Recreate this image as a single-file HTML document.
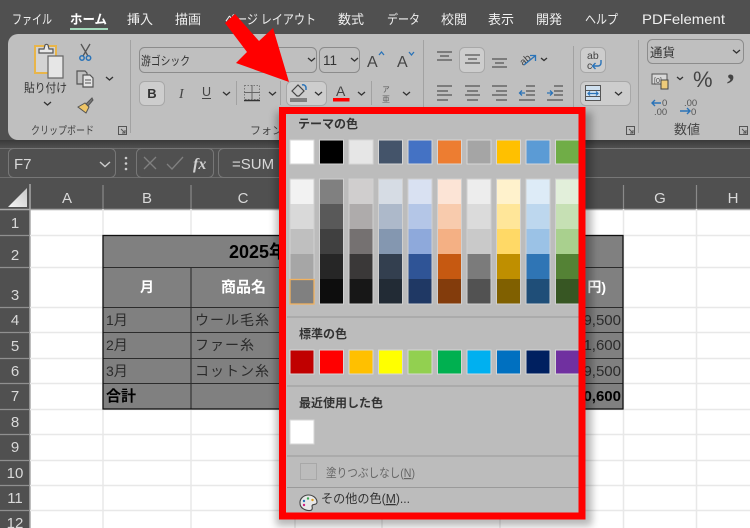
<!DOCTYPE html>
<html lang="ja"><head><meta charset="utf-8"><title>Excel</title>
<style>
html,body{margin:0;padding:0;background:#fff}
svg{display:block;position:absolute;left:0;top:0}
text{font-family:"Liberation Sans","Noto Sans CJK JP",sans-serif;white-space:pre}
.tab{font-size:13px;fill:#f0f0f0}
.rb{font-size:12px;fill:#333}
.lab{font-size:11px;fill:#444}
.hd{font-size:15px;fill:#d9d9d9;text-anchor:middle}
.cell{font-size:14px;fill:#2b2b2b}
.num{font-size:15px;fill:#2b2b2b;text-anchor:end}
.pt{font-size:12px;font-weight:700;fill:#333}
.ch{fill:none;stroke:#333;stroke-width:1.3}
.ln{stroke:#555;stroke-width:1.3}
.g{stroke:#e8e8e8;stroke-width:1.5}
.tb{stroke:#2c2c2c;stroke-width:1.1}
.btn{fill:#cdcdcd;stroke:#a8a8a8}
.box{fill:#bfbfbf;stroke:#8c8c8c}
.s{stroke:#d6d6d6;stroke-width:1}
</style></head><body>
<svg width="750" height="528" viewBox="0 0 750 528" xmlns="http://www.w3.org/2000/svg">
<defs>
<filter id="sh" x="-10%" y="-10%" width="120%" height="120%"><feGaussianBlur stdDeviation="4"/></filter>
<linearGradient id="top" x1="0" y1="0" x2="0" y2="1"><stop offset="0" stop-color="#3a3a3a"/><stop offset="1" stop-color="#505050"/></linearGradient>
<linearGradient id="corner" x1="0" y1="1" x2="1" y2="0"><stop offset="0" stop-color="#f5f5f5"/><stop offset="1" stop-color="#c8c8c8"/></linearGradient>
</defs>
<rect width="750" height="528" fill="#fff"/>
<rect width="750" height="209" fill="#505050"/>
<rect y="140" width="750" height="8" fill="url(#top)"/>

<!-- tabs -->
<text x="12" y="24" class="tab" textLength="40" lengthAdjust="spacingAndGlyphs">ファイル</text>
<text x="70" y="24" class="tab" style="font-weight:700;fill:#fff" textLength="37" lengthAdjust="spacingAndGlyphs">ホーム</text>
<rect x="70" y="28" width="38" height="2" fill="#a3d9bb"/>
<text x="127" y="24" class="tab">挿入</text>
<text x="175" y="24" class="tab">描画</text>
<text x="225" y="24" class="tab" textLength="91" lengthAdjust="spacingAndGlyphs">ページ レイアウト</text>
<text x="338" y="24" class="tab">数式</text>
<text x="387" y="24" class="tab" textLength="33" lengthAdjust="spacingAndGlyphs">データ</text>
<text x="441" y="24" class="tab">校閲</text>
<text x="488" y="24" class="tab">表示</text>
<text x="536" y="24" class="tab">開発</text>
<text x="585" y="24" class="tab" textLength="33" lengthAdjust="spacingAndGlyphs">ヘルプ</text>
<text x="642" y="24" class="tab" style="font-size:14px" textLength="83" lengthAdjust="spacingAndGlyphs">PDFelement</text>

<!-- ribbon -->
<path d="M760 34H18a10 10 0 0 0-10 10v86a10 10 0 0 0 10 10h742z" fill="#bfbfbf"/>
<g stroke="#a2a2a2" stroke-width="1">
<path d="M130.500 40V133M423.500 40V117M573.500 46V117M638.500 40V133M236.500 81V105M280.500 81V105M371.500 81V105"/>
</g>

<!-- paste -->
<path d="M35 46h21v27H35z" fill="#d4d4d4" stroke="#e8b54a" stroke-width="2"/>
<path d="M39 49h5l1-4a2 2 0 0 1 3 0l1 4h4v4H39z" fill="#e8e8e8" stroke="#555" stroke-width="1.200"/>
<path d="M48 56h15v22H48z" fill="#e6e6e6" stroke="#666" stroke-width="1.200"/>
<text x="24" y="92" class="rb" textLength="43" lengthAdjust="spacingAndGlyphs">貼り付け</text>
<path d="M44 102l3.500 3 3.500-3" class="ch"/>
<!-- scissors -->
<path d="M81 44l7 12M90 44l-7 12" stroke="#555" stroke-width="1.300" fill="none"/>
<circle cx="82" cy="58" r="2.200" fill="none" stroke="#2a73b8" stroke-width="1.500"/><circle cx="88.500" cy="58" r="2.200" fill="none" stroke="#2a73b8" stroke-width="1.500"/>
<!-- copy -->
<path d="M77 71h8l2 2v11h-10z" fill="none" stroke="#555" stroke-width="1.200"/>
<path d="M83 75h7l3 3v9H83z" fill="#e4e4e4" stroke="#555" stroke-width="1.200"/>
<path d="M85 80h6M85 83h6" stroke="#555"/>
<path d="M106 77l3.500 3 3.500-3" class="ch"/>
<!-- brush -->
<path d="M86 104l6-6 1 2-5 6z" fill="#777" stroke="#555"/>
<path d="M78 107l7-4 4 4-3 6z" fill="#eec566" stroke="#555"/>

<text x="31" y="134" class="lab" textLength="63" lengthAdjust="spacingAndGlyphs">クリップボード</text>
<g fill="none" stroke="#555"><path d="M118.500 126.500h8v8h-8zM121 129l4 4M125 130v3h-3"/><path d="M626.500 126.500h8v8h-8zM629 129l4 4M633 130v3h-3"/><path d="M739.500 126.500h8v8h-8zM742 129l4 4M746 130v3h-3"/></g>
<text x="250" y="134" class="lab">フォント</text>
<text x="674" y="134" class="lab" style="font-size:13px">数値</text>

<!-- font boxes -->
<rect x="139.500" y="47.500" width="177" height="25" rx="5" class="box"/>
<text x="141" y="65" style="font-size:12px;fill:#333" textLength="49" lengthAdjust="spacingAndGlyphs">游ゴシック</text>
<path d="M308 58l3.500 3 3.500-3" class="ch"/>
<rect x="319.500" y="47.500" width="40" height="25" rx="5" class="box"/>
<text x="323" y="65" style="font-size:13.500px;fill:#333">11</text>
<path d="M351 58l3.500 3 3.500-3" class="ch"/>
<text x="367" y="67" style="font-size:16px;fill:#444">A</text>
<path d="M379 55l2.500-3 2.500 3" fill="none" stroke="#2a73b8" stroke-width="1.300"/>
<text x="397" y="67" style="font-size:16px;fill:#444">A</text>
<path d="M409 52l2.500 3 2.500-3" fill="none" stroke="#2a73b8" stroke-width="1.300"/>

<!-- row 2 font -->
<rect x="139.500" y="81.500" width="25" height="24" rx="5" class="btn"/>
<text x="152" y="98" style="font-size:13px;font-weight:700;fill:#333;text-anchor:middle">B</text>
<text x="179" y="98" style="font-size:14px;font-style:italic;font-family:'Liberation Serif',serif;fill:#444">I</text>
<text x="202" y="96" style="font-size:12.500px;fill:#444">U</text>
<path d="M202 98.500h9" stroke="#444"/>
<path d="M223 92l3.500 3 3.500-3" class="ch"/>
<path d="M244.500 85.500h15v14h-15z" fill="none" stroke="#777" stroke-dasharray="1.500 1.500"/>
<path d="M252 85v14M244 92.500h16" stroke="#666"/>
<path d="M244 100.500h16" stroke="#333" stroke-width="1.500"/>
<path d="M269 92l3.500 3 3.500-3" class="ch"/>
<rect x="286.500" y="81.500" width="40" height="24" rx="5" class="btn"/>
<path d="M292 91l6-6 6 6-5 5h-2z" fill="none" stroke="#444" stroke-width="1.200"/>
<path d="M302 85a3 3 0 0 1 4 3v2" fill="none" stroke="#2a73b8" stroke-width="1.500"/>
<rect x="290" y="98" width="17" height="4" fill="#808080"/>
<path d="M315 92l3.500 3 3.500-3" class="ch"/>
<text x="336" y="96" style="font-size:14px;fill:#444">A</text>
<rect x="333" y="98" width="16.500" height="3.500" fill="#f00"/>
<path d="M358 92l3.500 3 3.500-3" class="ch"/>
<text x="386" y="92" style="font-size:7.500px;fill:#555;text-anchor:middle">ア</text>
<text x="386" y="102" style="font-size:8px;fill:#666;text-anchor:middle">亜</text>
<path d="M403 92l3.500 3 3.500-3" class="ch"/>

<!-- alignment -->
<rect x="459.500" y="47.500" width="25" height="25" rx="5" class="btn"/>
<path d="M437 52h15M440 56h9M437 60h15" class="ln"/>
<path d="M465 55h15M468 59h9M465 63h15" class="ln"/>
<path d="M492 59h15M495 63h9M492 67h15" class="ln"/>
<text x="0" y="0" transform="translate(523 66) rotate(-40)" style="font-size:10px;fill:#444">ab</text>
<path d="M524 65l11-9M530 55.500h5.500v5.500" fill="none" stroke="#2a73b8" stroke-width="1.300"/>
<path d="M541 58l3 2.500 3-2.500" class="ch"/>
<path d="M437 86h15M437 91h11M437 95h15M437 100h11" class="ln"/>
<path d="M465 86h15M467 91h11M465 95h15M467 100h11" class="ln"/>
<path d="M492 86h15M496 91h11M492 95h15M496 100h11" class="ln"/>
<path d="M526 86h9M526 91h9M526 95h9M519 100h16" class="ln"/>
<path d="M520 93h5M522 90.500l-2.500 2.500 2.500 2.500" fill="none" stroke="#2a73b8" stroke-width="1.300"/>
<path d="M554 86h9M554 91h9M554 95h9M547 100h16" class="ln"/>
<path d="M547 93h5M550 90.500l2.500 2.500-2.500 2.500" fill="none" stroke="#2a73b8" stroke-width="1.300"/>

<!-- wrap / merge -->
<rect x="580.500" y="47.500" width="25" height="25" rx="5" class="btn"/>
<text x="587" y="59" style="font-size:10.500px;fill:#444">ab</text>
<text x="587" y="69" style="font-size:10.500px;fill:#444">c</text>
<path d="M601 60v3a3 3 0 0 1-3 3h-5M595.500 63l-3 3 3 3" fill="none" stroke="#2a73b8" stroke-width="1.400"/>
<rect x="580.500" y="81.500" width="50" height="24" rx="5" class="btn"/>
<rect x="585.500" y="85.500" width="15" height="15" fill="#cfe0ef" stroke="#555"/>
<path d="M585 90.500h16M585 96.500h16" stroke="#555"/>
<path d="M588 93.500h10M590 91.500l-2 2 2 2M596 91.500l2 2-2 2" fill="none" stroke="#2a73b8" stroke-width="1.200"/>
<path d="M615 92l3.500 3 3.500-3" class="ch"/>

<!-- number -->
<rect x="647.500" y="39.500" width="96" height="24" rx="5" class="box"/>
<text x="650" y="57" style="font-size:12.500px;fill:#333">通貨</text>
<path d="M733 50l3.500 3 3.500-3" class="ch"/>
<rect x="652" y="74" width="15" height="10" fill="#d8d8d8" stroke="#555"/>
<text x="654" y="83" style="font-size:7px;fill:#444">[0]</text>
<rect x="661" y="80" width="7" height="9" fill="#eecb7a" stroke="#444"/>
<path d="M677 77l3 2.500 3-2.500" class="ch"/>
<text x="693" y="87" style="font-size:22px;fill:#444">%</text>
<text x="727" y="79" style="font-size:30px;font-weight:700;fill:#444;font-family:'Liberation Serif',serif">,</text>
<text x="662" y="106" style="font-size:9.500px;fill:#555">0</text>
<text x="654" y="115" style="font-size:9.500px;fill:#555">.00</text>
<path d="M652 103h9M655 100l-3 3 3 3" fill="none" stroke="#2a73b8" stroke-width="1.400"/>
<text x="684" y="106" style="font-size:9.500px;fill:#555">.00</text>
<text x="691" y="115" style="font-size:9.500px;fill:#555">0</text>
<path d="M680 111h10M687 108l3 3-3 3" fill="none" stroke="#2a73b8" stroke-width="1.400"/>

<!-- formula bar -->
<path d="M0 148.500H750M0 177.500H750" stroke="#6e6e6e"/>
<rect y="149" width="750" height="28" fill="#505050"/>
<rect x="8.500" y="148.500" width="107" height="29" rx="5" fill="#505050" stroke="#777"/>
<text x="14" y="169" style="font-size:15px;fill:#d8d8d8">F7</text>
<path d="M100 162l5 4.500 5-4.500" fill="none" stroke="#ccc" stroke-width="1.400"/>
<circle cx="126" cy="158" r="1.300" fill="#ccc"/><circle cx="126" cy="163.500" r="1.300" fill="#ccc"/><circle cx="126" cy="169" r="1.300" fill="#ccc"/>
<rect x="136.500" y="148.500" width="77" height="29" rx="5" fill="#505050" stroke="#777"/>
<path d="M144 157l12 12M156 157l-12 12M167 164l5 5 11-12" fill="none" stroke="#808080" stroke-width="1.300"/>
<text x="193" y="169" style="font-size:16px;font-style:italic;font-weight:700;font-family:'Liberation Serif',serif;fill:#d0d0d0">fx</text>
<rect x="218.500" y="148.500" width="560" height="29" rx="5" fill="#505050" stroke="#777"/>
<text x="232" y="169" style="font-size:15px;fill:#d8d8d8">=SUM</text>

<!-- headers -->
<rect x="0" y="209" width="30" height="319" fill="#505050"/>
<path d="M0 209.500H750" stroke="#a8a8a8" stroke-width="1.500"/>
<path d="M30 184V528" stroke="#a8a8a8" stroke-width="1.500"/>
<path d="M8 207L27 188V207z" fill="url(#corner)"/>
<path d="M103 185V209M191 185V209M623.500 185V209M696.500 185V209" stroke="#8a8a8a" stroke-width="1.200"/>
<text x="67" y="203" class="hd">A</text>
<text x="147" y="203" class="hd">B</text>
<text x="243" y="203" class="hd">C</text>
<text x="660" y="203" class="hd">G</text>
<text x="733" y="203" class="hd">H</text>
<path d="M0 235.500H30M0 267.500H30M0 307.500H30M0 332.500H30M0 358.500H30M0 383.500H30M0 409.500H30M0 434.500H30M0 460.500H30M0 485.500H30M0 510.500H30" stroke="#8f8f8f" stroke-width="1.200"/>
<text x="15" y="228" class="hd">1</text>
<text x="15" y="260" class="hd">2</text>
<text x="15" y="300" class="hd">3</text>
<text x="15" y="325" class="hd">4</text>
<text x="15" y="351" class="hd">5</text>
<text x="15" y="376" class="hd">6</text>
<text x="15" y="401" class="hd">7</text>
<text x="15" y="427" class="hd">8</text>
<text x="15" y="452" class="hd">9</text>
<text x="15" y="478" class="hd">10</text>
<text x="15" y="503" class="hd">11</text>
<text x="15" y="528" class="hd">12</text>

<!-- grid -->
<path class="g" d="M103 209V528M191 209V528M295 409V528M382 409V528M500 409V528M623.500 209V528M696.500 209V528"/>
<path class="g" d="M30 235.500H750M30 267.500H750M30 307.500H750M30 332.500H750M30 358.500H750M30 383.500H750M30 409.500H750M30 434.500H750M30 460.500H750M30 485.500H750M30 510.500H750"/>

<!-- table -->
<rect x="103" y="236" width="520" height="173" fill="#808080"/>
<path class="tb" d="M103 267.500H623M103 307.500H623M103 332.500H623M103 358.500H623M103 383.500H623M191 267V409"/>
<rect x="103" y="235.500" width="520" height="173.500" fill="none" stroke="#111" stroke-width="1.300"/>
<text x="229" y="258" style="font-size:18px;font-weight:700;fill:#000">2025年</text>
<text x="147" y="292" style="font-size:14px;font-weight:700;fill:#fff;text-anchor:middle">月</text>
<text x="243.500" y="292" style="font-size:15px;font-weight:700;fill:#fff;text-anchor:middle">商品名</text>
<text x="606" y="292" style="font-size:14px;font-weight:700;fill:#fff;text-anchor:end">円)</text>
<text x="106" y="325" class="cell">1月</text>
<text x="106" y="350" class="cell">2月</text>
<text x="106" y="376" class="cell">3月</text>
<text x="106" y="401" style="font-size:15px;font-weight:700;fill:#000">合計</text>
<text x="195" y="325" class="cell" style="letter-spacing:1px">ウール毛糸</text>
<text x="195" y="350" class="cell" style="letter-spacing:1px">ファー糸</text>
<text x="195" y="376" class="cell" style="letter-spacing:1px">コットン糸</text>
<text x="621" y="325" class="num">129,500</text>
<text x="621" y="350" class="num">181,600</text>
<text x="621" y="376" class="num">169,500</text>
<text x="621" y="401" class="num" style="font-weight:700;fill:#000">480,600</text>

<!-- dropdown -->
<rect x="276" y="112" width="316" height="414" fill="#000" opacity=".28" filter="url(#sh)"/>
<rect x="283" y="111" width="299" height="405" fill="#bcbcbc"/>
<text x="298" y="128" class="pt">テーマの色</text>

<g class="s">
<rect x="290" y="140" width="24" height="24" fill="#fff"/>
<rect x="319.500" y="140" width="24" height="24" fill="#000"/>
<rect x="349" y="140" width="24" height="24" fill="#e6e6e6"/>
<rect x="378.500" y="140" width="24" height="24" fill="#44546a"/>
<rect x="408" y="140" width="24" height="24" fill="#4472c4"/>
<rect x="437.500" y="140" width="24" height="24" fill="#ed7d31"/>
<rect x="467" y="140" width="24" height="24" fill="#a5a5a5"/>
<rect x="496.500" y="140" width="24" height="24" fill="#ffc000"/>
<rect x="526" y="140" width="24" height="24" fill="#5b9bd5"/>
<rect x="555.500" y="140" width="24" height="24" fill="#70ad47"/>
</g>

<g>
<rect x="290" y="179" width="24" height="25" fill="#f2f2f2"/><rect x="290" y="204" width="24" height="25" fill="#d9d9d9"/><rect x="290" y="229" width="24" height="25" fill="#bfbfbf"/><rect x="290" y="254" width="24" height="25" fill="#a6a6a6"/><rect x="290" y="279" width="24" height="25" fill="#808080"/>
<rect x="319.500" y="179" width="24" height="25" fill="#808080"/><rect x="319.500" y="204" width="24" height="25" fill="#595959"/><rect x="319.500" y="229" width="24" height="25" fill="#404040"/><rect x="319.500" y="254" width="24" height="25" fill="#262626"/><rect x="319.500" y="279" width="24" height="25" fill="#0d0d0d"/>
<rect x="349" y="179" width="24" height="25" fill="#d0cece"/><rect x="349" y="204" width="24" height="25" fill="#aeabab"/><rect x="349" y="229" width="24" height="25" fill="#757171"/><rect x="349" y="254" width="24" height="25" fill="#3a3838"/><rect x="349" y="279" width="24" height="25" fill="#171717"/>
<rect x="378.500" y="179" width="24" height="25" fill="#d6dce4"/><rect x="378.500" y="204" width="24" height="25" fill="#adb9ca"/><rect x="378.500" y="229" width="24" height="25" fill="#8497b0"/><rect x="378.500" y="254" width="24" height="25" fill="#333f4f"/><rect x="378.500" y="279" width="24" height="25" fill="#222b35"/>
<rect x="408" y="179" width="24" height="25" fill="#d9e1f2"/><rect x="408" y="204" width="24" height="25" fill="#b4c6e7"/><rect x="408" y="229" width="24" height="25" fill="#8ea9db"/><rect x="408" y="254" width="24" height="25" fill="#2f5496"/><rect x="408" y="279" width="24" height="25" fill="#1f3864"/>
<rect x="437.500" y="179" width="24" height="25" fill="#fce4d6"/><rect x="437.500" y="204" width="24" height="25" fill="#f8cbad"/><rect x="437.500" y="229" width="24" height="25" fill="#f4b084"/><rect x="437.500" y="254" width="24" height="25" fill="#c65911"/><rect x="437.500" y="279" width="24" height="25" fill="#833c0c"/>
<rect x="467" y="179" width="24" height="25" fill="#ededed"/><rect x="467" y="204" width="24" height="25" fill="#dbdbdb"/><rect x="467" y="229" width="24" height="25" fill="#c9c9c9"/><rect x="467" y="254" width="24" height="25" fill="#7b7b7b"/><rect x="467" y="279" width="24" height="25" fill="#525252"/>
<rect x="496.500" y="179" width="24" height="25" fill="#fff2cc"/><rect x="496.500" y="204" width="24" height="25" fill="#ffe699"/><rect x="496.500" y="229" width="24" height="25" fill="#ffd966"/><rect x="496.500" y="254" width="24" height="25" fill="#bf8f00"/><rect x="496.500" y="279" width="24" height="25" fill="#806000"/>
<rect x="526" y="179" width="24" height="25" fill="#ddebf7"/><rect x="526" y="204" width="24" height="25" fill="#bdd7ee"/><rect x="526" y="229" width="24" height="25" fill="#9bc2e6"/><rect x="526" y="254" width="24" height="25" fill="#2f75b5"/><rect x="526" y="279" width="24" height="25" fill="#1f4e78"/>
<rect x="555.500" y="179" width="24" height="25" fill="#e2efda"/><rect x="555.500" y="204" width="24" height="25" fill="#c6e0b4"/><rect x="555.500" y="229" width="24" height="25" fill="#a9d08e"/><rect x="555.500" y="254" width="24" height="25" fill="#548235"/><rect x="555.500" y="279" width="24" height="25" fill="#375623"/>
</g>
<g fill="none" stroke="#d0d0d0"><rect x="290" y="179" width="24" height="125"/><rect x="319.500" y="179" width="24" height="125"/><rect x="349" y="179" width="24" height="125"/><rect x="378.500" y="179" width="24" height="125"/><rect x="408" y="179" width="24" height="125"/><rect x="437.500" y="179" width="24" height="125"/><rect x="467" y="179" width="24" height="125"/><rect x="496.500" y="179" width="24" height="125"/><rect x="526" y="179" width="24" height="125"/><rect x="555.500" y="179" width="24" height="125"/></g>
<rect x="290" y="279.500" width="24" height="24.500" fill="none" stroke="#f2b25f" stroke-width="1.300"/>

<path d="M287 317H580M287 386H580M287 456H580M287 487.500H580" stroke="#9a9a9a" stroke-width="1"/>

<text x="299" y="338" class="pt">標準の色</text>
<g class="s">
<rect x="290" y="350" width="24" height="24" fill="#c00000"/>
<rect x="319.500" y="350" width="24" height="24" fill="#f00"/>
<rect x="349" y="350" width="24" height="24" fill="#ffc000"/>
<rect x="378.500" y="350" width="24" height="24" fill="#ff0"/>
<rect x="408" y="350" width="24" height="24" fill="#92d050"/>
<rect x="437.500" y="350" width="24" height="24" fill="#00b050"/>
<rect x="467" y="350" width="24" height="24" fill="#00b0f0"/>
<rect x="496.500" y="350" width="24" height="24" fill="#0070c0"/>
<rect x="526" y="350" width="24" height="24" fill="#002060"/>
<rect x="555.500" y="350" width="24" height="24" fill="#7030a0"/>
</g>
<text x="299" y="407" class="pt">最近使用した色</text>
<rect x="290" y="420" width="24" height="24" fill="#fff" stroke="#d6d6d6"/>
<rect x="300.500" y="463.500" width="16" height="16" fill="none" stroke="#a8a8a8"/>
<text x="326" y="477" style="font-size:12px;fill:#666" textLength="89" lengthAdjust="spacingAndGlyphs">塗りつぶしなし(<tspan text-decoration="underline">N</tspan>)</text>
<text x="321" y="503" style="font-size:12.500px;fill:#333" textLength="89" lengthAdjust="spacingAndGlyphs">その他の色(<tspan text-decoration="underline">M</tspan>)...</text>
<path d="M300 503a8.500 7.500 0 0 1 17-1c0 3-3 2-4.500 3s1 3-1 5c-2 1.500-11.500 0-11.500-7z" fill="#e8e8e8" stroke="#444" stroke-width="1.100"/>
<circle cx="304" cy="501" r="1.200" fill="#2a73b8"/><circle cx="308" cy="498.500" r="1.200" fill="#3aa655"/><circle cx="312.500" cy="500" r="1.200" fill="#e0a020"/><circle cx="304" cy="505" r="1.200" fill="#d02080"/>

<!-- red frame -->
<rect x="282.500" y="110.500" width="299.500" height="405.500" fill="none" stroke="#f00" stroke-width="7"/>
<!-- arrow -->
<path d="M225 23L235 14L259 41L273 28L289 82L236 63L247 52z" fill="#f00"/>
</svg>
</body></html>
